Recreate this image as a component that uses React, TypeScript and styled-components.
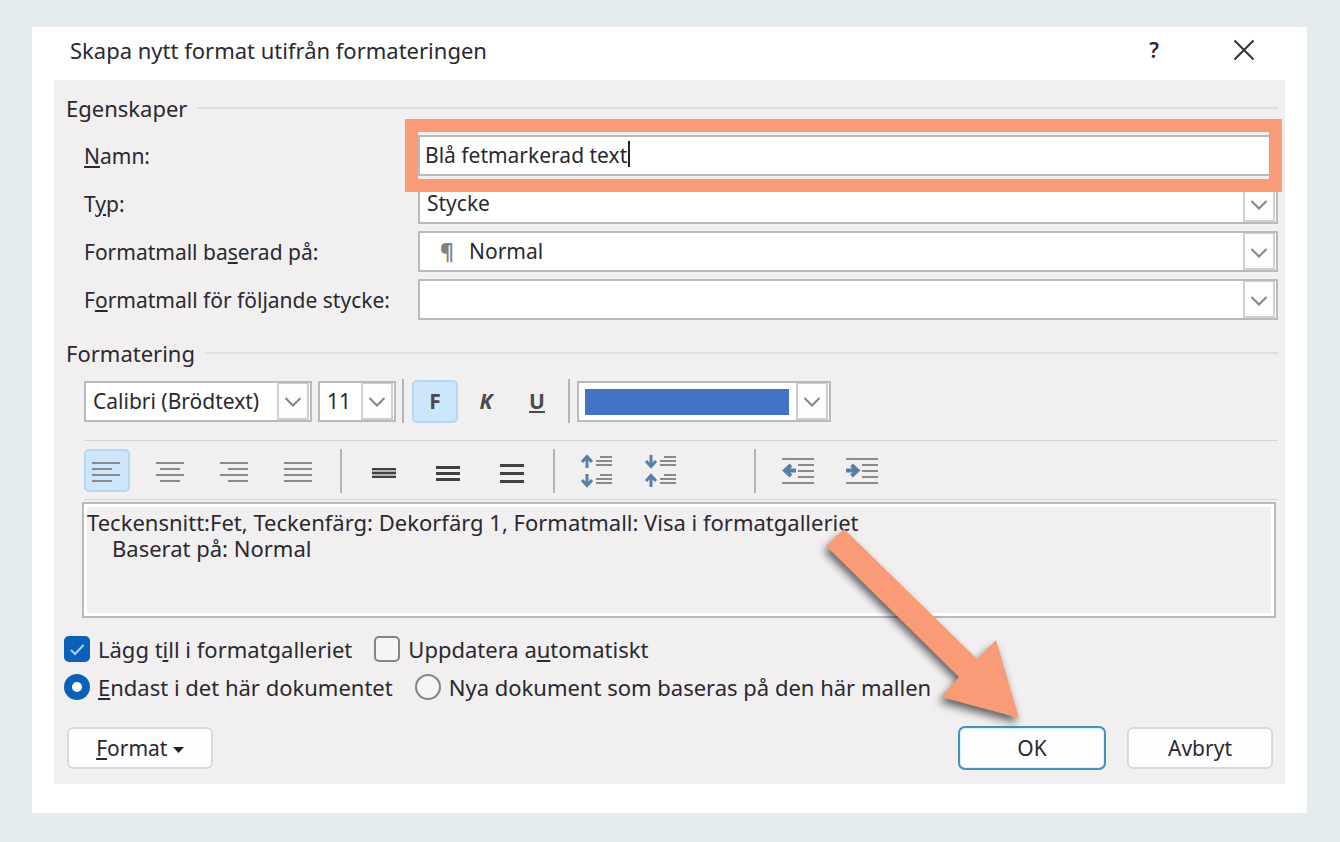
import React, { useState } from "react";
import styled, { createGlobalStyle, css } from "styled-components";

const line = "#bcb9bc";
const ink = "#2b2830";
const coral = "#f99b76";

const GlobalStyle = createGlobalStyle`
  *, *::before, *::after { box-sizing: border-box; }
  body {
    margin: 0;
    background: #e5ecf0;
    color: ${ink};
    font: 21px/28px "Noto Sans", "Open Sans", sans-serif;
  }
  button, input, select { font: inherit; color: inherit; margin: 0; }
`;

const Page = styled.main`
  padding: 27px 33px 29px 32px;
`;

const Card = styled.div`
  background: #fff;
  padding: 0 22px 29px;
`;

const TitleBar = styled.header`
  display: flex;
  align-items: center;
  height: 53px;
  padding: 0 18px 8px 16px;
`;

const Title = styled.h1`
  flex: 1;
  margin: 0;
  font-size: 22px;
  font-weight: 400;
`;

const TitleButton = styled.button`
  display: grid;
  place-items: center;
  width: 46px;
  height: 40px;
  margin-left: 44px;
  padding: 0;
  border: 0;
  background: none;
  font-weight: 600;
`;

const Body = styled.form`
  background: #f1eff0;
  padding: 14px 7px 14px 10px;
`;

const GroupHeader = styled.h2`
  display: flex;
  align-items: center;
  gap: 10px;
  margin: 0;
  padding-left: 2px;
  font-size: 22px;
  font-weight: 400;

  &::after {
    content: "";
    flex: 1;
    height: 2px;
    background: #e0dee0;
  }
`;

const Fields = styled.div`
  display: grid;
  gap: 7px;
  margin: 13px 0 19px;
  padding-left: 20px;
`;

const FieldRow = styled.div`
  display: grid;
  grid-template-columns: 334px 1fr;
  align-items: center;
`;

const Control = styled.div<{ $width?: number }>`
  position: relative;
  display: flex;
  height: 41px;
  ${(p) => p.$width && css`width: ${p.$width}px;`}
`;

const boxed = css`
  width: 100%;
  height: 100%;
  border: 2px solid ${line};
  border-radius: 0;
  background: #fff;
  outline: none;
`;

const TextInput = styled.input`
  ${boxed}
  padding: 0 5px 2px;
`;

const Select = styled.select<{ $indent?: number }>`
  ${boxed}
  appearance: none;
  padding: 0 36px 1px ${(p) => p.$indent ?? 7}px;
`;

const Arrow = styled.span`
  position: absolute;
  top: 2px;
  right: 3px;
  bottom: 2px;
  display: grid;
  place-items: center;
  width: 32px;
  padding-top: 3px;
  border: 2px solid #d0cdd3;
  border-top-width: 1px;
  background: #fdfdff;
  pointer-events: none;
`;

const Pilcrow = styled.span`
  position: absolute;
  top: 6px;
  left: 22px;
  color: #828082;
  font-weight: 800;
  pointer-events: none;
`;

const Caret = styled.span`
  position: absolute;
  top: 6px;
  left: 210px;
  width: 2px;
  height: 26px;
  background: #222;
`;

const Highlight = styled.span`
  position: absolute;
  inset: -16px -4px -16px -13px;
  z-index: 2;
  border: 13px solid ${coral};
  pointer-events: none;
`;

const FontBar = styled.div`
  display: flex;
  align-items: center;
  gap: 6px;
  height: 44px;
  margin: 12px 0 17px 20px;
`;

const StyleGroup = styled.div`
  display: flex;
  gap: 5px;
  padding: 0 2px 0 1px;
`;

const ToolButton = styled.button<{ $active?: boolean }>`
  display: grid;
  place-items: center;
  width: 46px;
  height: 43px;
  padding: 0;
  border: 2px solid ${(p) => (p.$active ? "#b3d9f2" : "transparent")};
  border-radius: 5px;
  background: ${(p) => (p.$active ? "#cce6fd" : "none")};
  color: #4c4a4d;
  font-weight: 700;
`;

const Separator = styled.span<{ $spaced?: boolean }>`
  width: 3px;
  height: 44px;
  margin-left: ${(p) => (p.$spaced ? 52 : 0)}px;
  border-left: 2px solid #b5b3b6;
`;

const ColorButton = styled.button`
  ${boxed}
  padding: 6px 40px 5px 6px;
`;

const Swatch = styled.span`
  display: block;
  height: 100%;
  background: #4472c4;
`;

const Rule = styled.hr`
  height: 1px;
  margin: 0 0 0 20px;
  border: 0;
  background: #d6d4d7;
`;

const ParagraphBar = styled.div`
  display: flex;
  align-items: center;
  gap: 18px;
  height: 43px;
  margin: 8px 0 7px 20px;
`;

const Preview = styled.div`
  min-height: 116px;
  margin: 2px 2px 18px 18px;
  padding: 5px 2px;
  border: 2px solid ${line};
  box-shadow: inset 0 0 0 3px #fff;
  font-size: 22px;
  line-height: 26px;
`;

const PreviewLine = styled.p<{ $indented?: boolean }>`
  margin: 0;
  padding-left: ${(p) => (p.$indented ? 26 : 1)}px;
`;

const Choices = styled.div`
  display: flex;
  gap: 22px;
  height: 26px;
  margin-bottom: 12px;
  font-size: 22px;
`;

const Choice = styled.label`
  display: flex;
  align-items: center;
  gap: 8px;
`;

const Mark = styled.span`
  position: relative;
  display: flex;

  svg { position: absolute; inset: 0; pointer-events: none; }
`;

const Tick = styled.input`
  appearance: none;
  width: 26px;
  height: 26px;
  border: 2px solid #858386;
  border-radius: ${(p) => (p.type === "radio" ? "50%" : "5px")};
  background: #f6f5f6;

  &:checked { border-color: #0b61b8; background: #0b61b8; }
  &:checked[type="radio"] { border-width: 8px; background: #fff; }
`;

const Footer = styled.footer`
  display: flex;
  align-items: center;
  gap: 21px;
  margin-top: 26px;
  padding: 0 5px 0 3px;
`;

const PushButton = styled.button<{ $primary?: boolean }>`
  width: ${(p) => (p.$primary ? 148 : 146)}px;
  height: ${(p) => (p.$primary ? 44 : 42)}px;
  padding: 0;
  border: 2px solid ${(p) => (p.$primary ? "#4a90b8" : "#dad8da")};
  border-radius: ${(p) => (p.$primary ? 7 : 6)}px;
  background: #fefdff;
  ${(p) => p.$primary && css`box-shadow: inset 0 0 0 1px #d5f2fc;`}

  svg { vertical-align: middle; }
`;

const Spacer = styled.span`
  flex: 1;
`;

const Pointed = styled.div`
  position: relative;
  display: flex;
`;

const Pointer = styled.svg`
  position: absolute;
  left: -141px;
  top: -207px;
  z-index: 2;
  pointer-events: none;
  filter: drop-shadow(-2px 5px 4px rgba(0, 0, 0, 0.6));
`;

const Chevron = () => (
  <Arrow aria-hidden>
    <svg width="18" height="12" viewBox="0 0 18 12" fill="none" stroke="#858388" strokeWidth="2">
      <path d="M1.5 2 9 9.5 16.5 2" />
    </svg>
  </Arrow>
);

/* Horizontal strokes given as [x1, x2, y]. */
function Strokes({ rows, color = "#8b898c", weight = 2 }: { rows: number[][]; color?: string; weight?: number }) {
  return (
    <g stroke={color} strokeWidth={weight}>
      {rows.map(([a, b, y]) => (
        <path key={y} d={`M${a} ${y}H${b}`} />
      ))}
    </g>
  );
}

const Icon = ({ children }: { children: React.ReactNode }) => (
  <svg width="40" height="35" viewBox="0 0 40 35" fill="none" aria-hidden>
    {children}
  </svg>
);

const aligns = [
  { name: "Vänsterjustera", rows: [[5, 33, 10], [5, 25, 16], [5, 33, 22], [5, 25, 28]] },
  { name: "Centrera", rows: [[5, 33, 10], [9, 29, 16], [5, 33, 22], [9, 29, 28]] },
  { name: "Högerjustera", rows: [[5, 33, 10], [13, 33, 16], [5, 33, 22], [13, 33, 28]] },
  { name: "Marginaljustera", rows: [[5, 33, 10], [5, 33, 16], [5, 33, 22], [5, 33, 28]] },
];

const spacings = [
  { name: "Enkelt radavstånd", gap: 4 },
  { name: "1,5 radavstånd", gap: 6 },
  { name: "Dubbelt radavstånd", gap: 8 },
];

const blue = "#5580aa";
const upArrow = (y: number) => `M10 ${y + 14}V${y + 3}M5 ${y + 8}L10 ${y + 2.5}L15 ${y + 8}`;
const downArrow = (y: number) => `M10 ${y}V${y + 11}M5 ${y + 6}L10 ${y + 11.5}L15 ${y + 6}`;
const paragraphRows = [[23, 35, 4], [19, 35, 8], [19, 35, 12], [23, 35, 22], [19, 35, 26], [19, 35, 30]];
const indentRows = [[4, 36, 6], [20, 36, 12], [20, 36, 18], [20, 36, 24], [4, 36, 30]];

export default function App() {
  const [align, setAlign] = useState(0);
  const [bold, setBold] = useState(true);

  return (
    <>
      <GlobalStyle />
      <Page>
        <Card>
          <TitleBar>
            <Title>Skapa nytt format utifrån formateringen</Title>
            <TitleButton type="button" aria-label="Hjälp">?</TitleButton>
            <TitleButton type="button" aria-label="Stäng">
              <svg width="22" height="22" viewBox="0 0 22 22" stroke="#333" strokeWidth="2">
                <path d="M1.5 1.5 20.5 20.5M20.5 1.5 1.5 20.5" />
              </svg>
            </TitleButton>
          </TitleBar>

          <Body onSubmit={(e) => e.preventDefault()}>
            <GroupHeader>Egenskaper</GroupHeader>
            <Fields>
              <FieldRow>
                <label htmlFor="name"><u>N</u>amn:</label>
                <Control>
                  <TextInput id="name" defaultValue="Blå fetmarkerad text" />
                  <Caret />
                  <Highlight />
                </Control>
              </FieldRow>
              <FieldRow>
                <label htmlFor="type">T<u>y</u>p:</label>
                <Control>
                  <Select id="type"><option>Stycke</option></Select>
                  <Chevron />
                </Control>
              </FieldRow>
              <FieldRow>
                <label htmlFor="base">Formatmall ba<u>s</u>erad på:</label>
                <Control>
                  <Select id="base" $indent={49}><option>Normal</option></Select>
                  <Pilcrow aria-hidden>¶</Pilcrow>
                  <Chevron />
                </Control>
              </FieldRow>
              <FieldRow>
                <label htmlFor="next">F<u>o</u>rmatmall för följande stycke:</label>
                <Control>
                  <Select id="next"><option></option></Select>
                  <Chevron />
                </Control>
              </FieldRow>
            </Fields>

            <GroupHeader>Formatering</GroupHeader>
            <FontBar>
              <Control $width={228}>
                <Select aria-label="Teckensnitt"><option>Calibri (Brödtext)</option></Select>
                <Chevron />
              </Control>
              <Control $width={78}>
                <Select aria-label="Teckenstorlek"><option>11</option></Select>
                <Chevron />
              </Control>
              <Separator />
              <StyleGroup>
                <ToolButton type="button" $active={bold} onClick={() => setBold(!bold)}>F</ToolButton>
                <ToolButton type="button"><i>K</i></ToolButton>
                <ToolButton type="button"><u>U</u></ToolButton>
              </StyleGroup>
              <Separator />
              <Control $width={254}>
                <ColorButton type="button" aria-label="Teckenfärg"><Swatch /></ColorButton>
                <Chevron />
              </Control>
            </FontBar>
            <Rule />
            <ParagraphBar>
              {aligns.map((a, i) => (
                <ToolButton type="button" key={a.name} aria-label={a.name} $active={align === i} onClick={() => setAlign(i)}>
                  <Icon><Strokes rows={a.rows} /></Icon>
                </ToolButton>
              ))}
              <Separator />
              {spacings.map(({ name, gap }) => (
                <ToolButton type="button" key={name} aria-label={name}>
                  <Icon>
                    {gap === 4 && <path d="M8 16H32V25H8Z" fill="#b5b3b6" />}
                    <Strokes color="#434044" weight={gap === 4 ? 2 : 3} rows={[20 - gap, 20, 20 + gap].map((y) => [8, 32, gap === 4 ? y : y + 0.5])} />
                  </Icon>
                </ToolButton>
              ))}
              <Separator />
              <ToolButton type="button" aria-label="Öka avståndet">
                <Icon>
                  <path d={upArrow(1) + downArrow(21)} stroke={blue} strokeWidth="3" />
                  <Strokes rows={paragraphRows} />
                </Icon>
              </ToolButton>
              <ToolButton type="button" aria-label="Minska avståndet">
                <Icon>
                  <path d={downArrow(2) + upArrow(20)} stroke={blue} strokeWidth="3" />
                  <Strokes rows={paragraphRows} />
                </Icon>
              </ToolButton>
              <Separator $spaced />
              <ToolButton type="button" aria-label="Minska indrag">
                <Icon>
                  <Strokes rows={indentRows} />
                  <path d="M18 17.5H8M13 12 7 17.5 13 23" stroke={blue} strokeWidth="4" />
                </Icon>
              </ToolButton>
              <ToolButton type="button" aria-label="Öka indrag">
                <Icon>
                  <Strokes rows={indentRows} />
                  <path d="M4 17.5H14M9.500 12 15.5 17.5 9.500 23" stroke={blue} strokeWidth="4" />
                </Icon>
              </ToolButton>
            </ParagraphBar>
            <Rule />
            <Preview>
              <PreviewLine>Teckensnitt:Fet, Teckenfärg: Dekorfärg 1, Formatmall: Visa i formatgalleriet</PreviewLine>
              <PreviewLine $indented>Baserat på: Normal</PreviewLine>
            </Preview>

            <Choices>
              <Choice>
                <Mark>
                  <Tick type="checkbox" defaultChecked />
                  <svg width="26" height="26" viewBox="0 0 26 26" fill="none" stroke="#a9d3f5" strokeWidth="2">
                    <path d="M7 14 11 18 19.500 9" />
                  </svg>
                </Mark>
                <span>Lägg t<u>i</u>ll i formatgalleriet</span>
              </Choice>
              <Choice>
                <Tick type="checkbox" />
                <span>Uppdatera a<u>u</u>tomatiskt</span>
              </Choice>
            </Choices>
            <Choices>
              <Choice>
                <Tick type="radio" name="scope" defaultChecked />
                <span><u>E</u>ndast i det här dokumentet</span>
              </Choice>
              <Choice>
                <Tick type="radio" name="scope" />
                <span>Nya dokument som baseras på den här mallen</span>
              </Choice>
            </Choices>

            <Footer>
              <PushButton type="button">
                <u>F</u>ormat{" "}
                <svg width="11" height="6" viewBox="0 0 11 6" aria-hidden><path d="M0 0H11L5.5 6Z" fill="#222" /></svg>
              </PushButton>
              <Spacer />
              <Pointed>
                <PushButton type="submit" $primary>OK</PushButton>
                <Pointer width="220" height="220" viewBox="0 0 220 220" aria-hidden>
                  <path d="M27 10 160 140 179 121 202 199 124 178 142 158 9 27Z" fill={coral} />
                </Pointer>
              </Pointed>
              <PushButton type="button">Avbryt</PushButton>
            </Footer>
          </Body>
        </Card>
      </Page>
    </>
  );
}
